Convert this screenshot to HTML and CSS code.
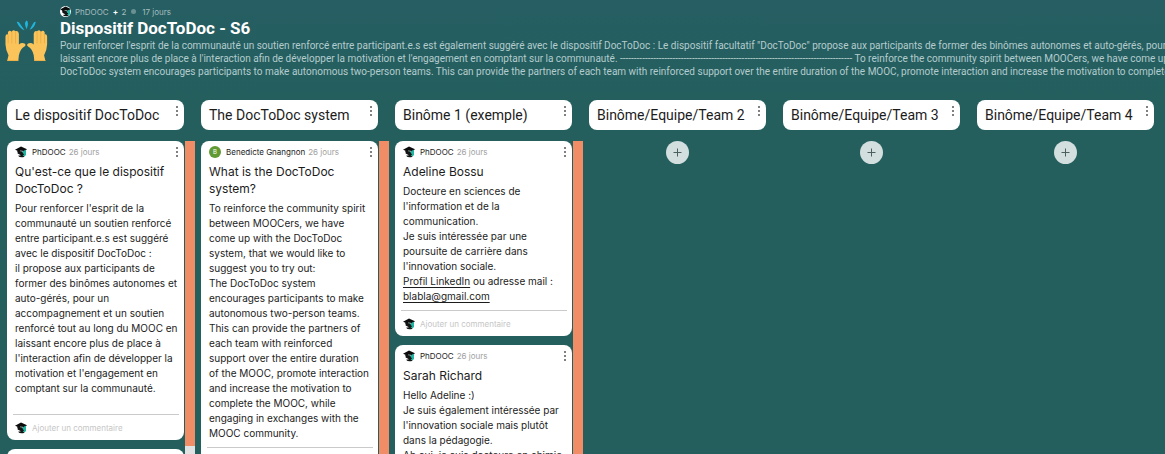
FILE: index.html
```html
<!DOCTYPE html>
<html lang="fr">
<head>
  <meta charset="UTF-8">
  <meta name="viewport" content="width=device-width, initial-scale=1.0">
  <title>Dispositif DocToDoc - S6</title>
  <link rel="stylesheet" href="styles.css">
</head>
<body>

  <!-- shared icons -->
  <svg class="sprite" aria-hidden="true">
    <symbol id="icon-cap" viewBox="0 0 12 12">
      <path d="M6 0.6 L12 3.2 L10 4.8 L10 6 L2.5 6 L2.5 4.8 L0 3.8 Z" fill="#0b0b0b"/>
      <path d="M2.6 4.5 H9 L8 6.5 L10 8.6 L9 11 Q5 12 3 9.8 L6 9.2 L2.6 7.4 Z" fill="#141414"/>
      <path d="M5 4.4 Q8 4.2 9 5.6 L7.8 6.2 Q6.6 5 5 5.2 Z" fill="#8fa5a2"/>
      <path d="M9 4.4 L11 3.8 V9 L9.4 10.4 L7.6 9.6 L9.2 8.2 L7.4 6.8 Z" fill="#1fb5a0"/>
    </symbol>
    <symbol id="icon-dots" viewBox="0 0 2 10">
      <rect y="0" width="2" height="2"/>
      <rect y="4" width="2" height="2"/>
      <rect y="8" width="2" height="2"/>
    </symbol>
    <symbol id="icon-plus" viewBox="0 0 9 9">
      <path d="M4.5 0.5 V8.5 M0.5 4.5 H8.5" stroke="#4b5f5f" stroke-width="1" fill="none"/>
    </symbol>
  </svg>

  <header class="board-header">
    <svg class="board-icon" viewBox="0 0 44 44" aria-hidden="true">
      <g fill="#1eb6dc">
        <path d="M12 2 Q14 1 15.5 4 L20 10.5 Q15 9 12 2 Z"/>
        <path d="M21.8 0.5 Q23.8 1 23.4 5 L22.2 9.5 Q20.4 6 20.4 3 Z"/>
        <path d="M31.5 2 Q30 1 28.5 4 L25.2 10 Q30 8.5 31.5 2 Z"/>
      </g>
      <path d="M2.2 42 L3.6 36 Q0.6 30 0.5 25 V17 Q0.8 14 3 14.8 V12.5 Q4.5 10 6.8 12 Q8.2 9 10.8 11.5 Q13.6 10.2 14.2 14 V25 Q17 22.6 20 24 Q22 25.4 20 27.2 Q16 29 14.2 36 L13.6 42 Z" fill="#fbc45a"/>
      <path d="M3.2 15 V24 M7 12.2 V24 M10.8 12.2 V24 M2.2 41.5 H13.6" stroke="#e3a544" stroke-width="0.7" fill="none"/>
      <g transform="translate(43.6 0) scale(-1 1)">
        <path d="M2.2 42 L3.6 36 Q0.6 30 0.5 25 V17 Q0.8 14 3 14.8 V12.5 Q4.5 10 6.8 12 Q8.2 9 10.8 11.5 Q13.6 10.2 14.2 14 V25 Q17 22.6 20 24 Q22 25.4 20 27.2 Q16 29 14.2 36 L13.6 42 Z" fill="#fbc45a"/>
        <path d="M3.2 15 V24 M7 12.2 V24 M10.8 12.2 V24 M2.2 41.5 H13.6" stroke="#e3a544" stroke-width="0.7" fill="none"/>
      </g>
    </svg>
    <div class="board-info">
      <div class="board-meta">
        <span class="avatar-round"><svg><use href="#icon-cap"/></svg></span>
        <span>PhDOOC</span>
        <span class="more-authors"><b>+</b> 2</span>
        <span class="separator"></span>
        <span>17 jours</span>
      </div>
      <h1>Dispositif DocToDoc - S6</h1>
      <p>Pour renforcer l'esprit de la communauté un soutien renforcé entre participant.e.s est également suggéré avec le dispositif DocToDoc : Le dispositif facultatif "DocToDoc" propose aux participants de former des binômes autonomes et auto-gérés, pour<br>
      laissant encore plus de place à l'interaction afin de développer la motivation et l'engagement en comptant sur la communauté. ------------------------------------------------------------------------------------ To reinforce the community spirit between MOOCers, we have come up<br>
      DocToDoc system encourages participants to make autonomous two-person teams. This can provide the partners of each team with reinforced support over the entire duration of the MOOC, promote interaction and increase the motivation to complete</p>
    </div>
  </header>

  <main class="board">

    <section class="column">
      <div class="column-title">
        <h2>Le dispositif DocToDoc</h2>
        <button class="dots" aria-label="Options"><svg><use href="#icon-dots"/></svg></button>
      </div>
      <div class="column-body">
        <div class="cards">
          <article class="card">
            <div class="card-meta">
              <svg class="avatar"><use href="#icon-cap"/></svg>
              <span class="author">PhDOOC</span>
              <span class="date">26 jours</span>
              <button class="dots" aria-label="Options"><svg><use href="#icon-dots"/></svg></button>
            </div>
            <h3>Qu'est-ce que le dispositif DocToDoc ?</h3>
            <p class="spaced">Pour renforcer l'esprit de la communauté un soutien renforcé entre participant.e.s est suggéré avec le dispositif DocToDoc :<br>
            il propose aux participants de former des binômes autonomes et auto-gérés, pour un accompagnement et un soutien renforcé tout au long du MOOC en laissant encore plus de place à l'interaction afin de développer la motivation et l'engagement en comptant sur la communauté.</p>
            <label class="comment">
              <svg class="avatar"><use href="#icon-cap"/></svg>
              <input type="text" placeholder="Ajouter un commentaire" aria-label="Commentaire">
            </label>
          </article>
          <article class="card">
            <div class="card-meta"></div>
          </article>
        </div>
        <div class="scrollbar scrollbar-top"><div class="thumb"></div></div>
      </div>
    </section>

    <section class="column">
      <div class="column-title">
        <h2>The DocToDoc system</h2>
        <button class="dots" aria-label="Options"><svg><use href="#icon-dots"/></svg></button>
      </div>
      <div class="column-body">
        <div class="cards">
          <article class="card">
            <div class="card-meta">
              <span class="avatar initial">B</span>
              <span class="author">Benedicte Gnangnon</span>
              <span class="date">26 jours</span>
              <button class="dots" aria-label="Options"><svg><use href="#icon-dots"/></svg></button>
            </div>
            <h3>What is the DocToDoc system?</h3>
            <p>To reinforce the community spirit between MOOCers, we have<br>
            come up with the DocToDoc<br>
            system, that we would like to suggest you to try out:<br>
            The DocToDoc system encourages participants to make autonomous two-person teams. This can provide the partners of each team with reinforced<br>
            support over the entire duration<br>
            of the MOOC, promote interaction and increase the motivation to complete the MOOC, while engaging in exchanges with the MOOC community.</p>
            <label class="comment">
              <svg class="avatar"><use href="#icon-cap"/></svg>
              <input type="text" placeholder="Ajouter un commentaire" aria-label="Commentaire">
            </label>
          </article>
        </div>
        <div class="scrollbar"><div class="thumb"></div></div>
      </div>
    </section>

    <section class="column">
      <div class="column-title">
        <h2>Binôme 1 (exemple)</h2>
        <button class="dots" aria-label="Options"><svg><use href="#icon-dots"/></svg></button>
      </div>
      <div class="column-body">
        <div class="cards">
          <article class="card">
            <div class="card-meta">
              <svg class="avatar"><use href="#icon-cap"/></svg>
              <span class="author">PhDOOC</span>
              <span class="date">26 jours</span>
              <button class="dots" aria-label="Options"><svg><use href="#icon-dots"/></svg></button>
            </div>
            <h3>Adeline Bossu</h3>
            <p>Docteure en sciences de l'information et de la communication.<br>
            Je suis intéressée par une poursuite de carrière dans l'innovation sociale.<br>
            <a href="#">Profil LinkedIn</a> ou adresse mail : <a href="mailto:blabla@gmail.com">blabla@gmail.com</a></p>
            <label class="comment">
              <svg class="avatar"><use href="#icon-cap"/></svg>
              <input type="text" placeholder="Ajouter un commentaire" aria-label="Commentaire">
            </label>
          </article>
          <article class="card">
            <div class="card-meta">
              <svg class="avatar"><use href="#icon-cap"/></svg>
              <span class="author">PhDOOC</span>
              <span class="date">26 jours</span>
              <button class="dots" aria-label="Options"><svg><use href="#icon-dots"/></svg></button>
            </div>
            <h3>Sarah Richard</h3>
            <p>Hello Adeline :)<br>
            Je suis également intéressée par l'innovation sociale mais plutôt dans la pédagogie.<br>
            Ah oui, je suis docteure en chimie</p>
          </article>
        </div>
        <div class="scrollbar"><div class="thumb"></div></div>
      </div>
    </section>

    <section class="column">
      <div class="column-title">
        <h2>Binôme/Equipe/Team 2</h2>
        <button class="dots" aria-label="Options"><svg><use href="#icon-dots"/></svg></button>
      </div>
      <button class="add" aria-label="Ajouter"><svg><use href="#icon-plus"/></svg></button>
    </section>

    <section class="column">
      <div class="column-title">
        <h2>Binôme/Equipe/Team 3</h2>
        <button class="dots" aria-label="Options"><svg><use href="#icon-dots"/></svg></button>
      </div>
      <button class="add" aria-label="Ajouter"><svg><use href="#icon-plus"/></svg></button>
    </section>

    <section class="column">
      <div class="column-title">
        <h2>Binôme/Equipe/Team 4</h2>
        <button class="dots" aria-label="Options"><svg><use href="#icon-dots"/></svg></button>
      </div>
      <button class="add" aria-label="Ajouter"><svg><use href="#icon-plus"/></svg></button>
    </section>

  </main>

</body>
</html>
```
FILE: styles.css
```css
* {
  box-sizing: border-box;
}
body {
  display: flex;
  flex-direction: column;
  height: 100vh;
  margin: 0;
  overflow: hidden;
  font-family: Inter, sans-serif;
  color: #1c1c1c;
  background: linear-gradient(#265e63, #245f5e 100px);
}
h1, h2, h3, p {
  margin: 0;
}
button {
  padding: 0;
  border: none;
  background: none;
  cursor: pointer;
}
.sprite {
  display: none;
}

/* header */
.board-header {
  display: flex;
  gap: 12px;
  padding: 5px 0 0 5px;
}
.board-icon {
  flex: none;
  width: 43px;
  height: 43px;
  margin-top: 15px;
}
.board-info {
  font-family: Roboto, sans-serif;
  white-space: nowrap;
}
.board-meta {
  display: flex;
  align-items: center;
  height: 13px;
  font-family: Inter, sans-serif;
  font-size: 8px;
  color: #a5bdbf;
}
.avatar-round {
  display: flex;
  width: 11px;
  height: 11px;
  margin-right: 4px;
  border-radius: 50%;
  overflow: hidden;
  background: #fff;
}
.avatar-round svg {
  width: 11px;
  height: 11px;
}
.more-authors {
  margin-left: 4px;
}
.more-authors b {
  margin-right: 1px;
  color: #fff;
}
.separator {
  width: 5px;
  height: 5px;
  margin: 0 6px 0 5px;
  border-radius: 50%;
  background: #6b9092;
}
h1 {
  font-size: 17px;
  line-height: 21px;
  color: #fff;
}
.board-info p {
  font-size: 10px;
  line-height: 13px;
  color: #b4cccd;
}

/* columns */
.board {
  display: flex;
  flex: 1;
  gap: 6px;
  min-height: 0;
  padding: 22px 0 0 7px;
}
.column {
  display: flex;
  flex: none;
  flex-direction: column;
  gap: 11px;
  width: 188px;
}
.column-title {
  display: flex;
  align-items: flex-start;
  justify-content: space-between;
  margin-right: 11px;
  padding: 0 6px 0 8px;
  border-radius: 8px;
  background: #fff;
}
h2 {
  font-family: Roboto, sans-serif;
  font-size: 14px;
  font-weight: 400;
  line-height: 30px;
}
.dots {
  display: flex;
  margin-left: auto;
}
.dots svg {
  width: 2px;
  height: 10px;
  fill: #808080;
}
.column-title .dots {
  padding-top: 6px;
}
.column-body {
  display: flex;
  flex: 1;
  gap: 1px;
  min-height: 0;
}
.cards {
  display: flex;
  flex: 1;
  flex-direction: column;
  gap: 9px;
  min-width: 0;
}
.scrollbar {
  width: 10px;
  background: #e2e2e2;
}
.thumb {
  height: 100%;
  background: #f08d66;
}
.scrollbar-top .thumb {
  height: calc(100% - 8px);
}
.add {
  display: flex;
  align-items: center;
  justify-content: center;
  width: 23px;
  height: 23px;
  margin-left: 77px;
  border-radius: 50%;
  background: #d3dfdf;
}
.add svg {
  width: 9px;
  height: 9px;
}

/* cards */
.card {
  flex: none;
  border-radius: 8px;
  background: #fff;
}
.card-meta {
  display: flex;
  align-items: center;
  gap: 3px;
  height: 22px;
  padding: 0 6px 0 8px;
  font-size: 8px;
}
.avatar {
  flex: none;
  width: 12px;
  height: 12px;
}
.initial {
  border-radius: 50%;
  font-size: 6px;
  line-height: 12px;
  text-align: center;
  color: #fff;
  background: #619a33;
}
.author {
  margin-left: 2px;
}
.date {
  color: #a0a0a0;
}
h3 {
  padding: 0 8px;
  font-size: 12px;
  font-weight: 400;
  line-height: 17px;
}
.card p {
  padding: 4px 4px 6px 8px;
  font-size: 10px;
  line-height: 15px;
}
.card p.spaced {
  padding-bottom: 18px;
}
.card a {
  color: inherit;
  text-underline-offset: 2px;
}
.comment {
  display: flex;
  align-items: center;
  gap: 5px;
  height: 26px;
  margin: 0 5px 0 6px;
  padding: 0 2px;
  border-top: 1px solid #cacaca;
}
.comment input {
  flex: 1;
  min-width: 0;
  padding: 0;
  border: none;
  outline: none;
  font-family: inherit;
  font-size: 8px;
  background: none;
}
.comment input::placeholder {
  color: #c6c6c6;
}
```
